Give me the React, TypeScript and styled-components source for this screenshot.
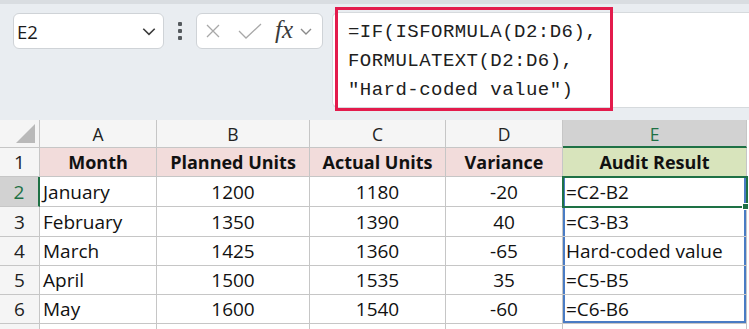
import styled, { createGlobalStyle } from "styled-components";

const GlobalStyle = createGlobalStyle`
    html, body {
        margin: 0;
        padding: 0;
        background: #ffffff;
        overflow: hidden;
    }
    * {
        box-sizing: border-box;
    }
`;

const Page = styled.div`
    width: 749px;
    height: 329px;
    overflow: hidden;
    background: #ffffff;
    font-family: "Open Sans", "Liberation Sans", sans-serif;
`;

const Toolbar = styled.div`
    height: 120px;
    background: #e9edf1;
    border-top: 4px solid #d9dde1;
    display: flex;
    align-items: flex-start;
    padding: 9px 0 0 13px;
`;

const NameBox = styled.div`
    width: 151px;
    height: 36px;
    background: #ffffff;
    border: 1px solid #cfd3d7;
    border-radius: 6px;
    display: flex;
    align-items: center;
    justify-content: space-between;
    padding: 0 6px 0 3px;
    font-size: 18.5px;
    color: #1b1b1b;
`;

const Dots = styled.div`
    width: 32px;
    height: 36px;
    display: flex;
    flex-direction: column;
    align-items: center;
    justify-content: center;
    gap: 3px;

    span {
        width: 4px;
        height: 4px;
        border-radius: 1px;
        background: #555a5e;
    }
`;

const ButtonsBox = styled.div`
    width: 127px;
    height: 36px;
    background: #ffffff;
    border: 1px solid #cfd3d7;
    border-radius: 6px;
    display: flex;
    align-items: center;
    padding: 0 0 0 8px;
`;

const Fx = styled.span`
    font-family: "Liberation Serif", "DejaVu Serif", serif;
    font-style: italic;
    font-size: 25px;
    color: #3a3a3a;
    margin: -3px 6px 0 12px;
    letter-spacing: 0px;
`;

const FormulaBar = styled.div`
    position: relative;
    flex: 1;
    height: 96px;
    margin: -1px 0 0 9px;
    background: #ffffff;
    border: 1px solid #d6dadd;
    border-right: none;
    border-radius: 6px 0 0 6px;
`;

const FormulaText = styled.pre`
    margin: 0;
    padding: 5px 0 0 15px;
    font-family: "Liberation Mono", "DejaVu Sans Mono", monospace;
    font-size: 19px;
    letter-spacing: 0.46px;
    line-height: 29px;
    color: #202020;
`;

const Highlight = styled.div`
    position: absolute;
    left: 2px;
    top: -6px;
    width: 278px;
    height: 104px;
    border: 3px solid #e31b4c;
    pointer-events: none;
`;

const Sheet = styled.div`
    display: grid;
    grid-template-columns: 40px 117px 153px 136px 117px 184px;
    grid-template-rows: 28px 29px 30px 30px 29px 29px 29px 10px;
    background: #ffffff;
`;

const ColHead = styled.div<{ $active?: boolean }>`
    display: flex;
    align-items: center;
    justify-content: center;
    background: ${({ $active }) => ($active ? "#d2d2d2" : "#f5f5f5")};
    color: ${({ $active }) => ($active ? "#1e7145" : "#222222")};
    border-right: 1px solid #c6c6c6;
    border-bottom: ${({ $active }) => ($active ? "2px solid #1e7145" : "1px solid #c6c6c6")};
    font-size: 17.5px;
    padding-top: 1px;
`;

const Corner = styled.div`
    position: relative;
    background: #f5f5f5;
    border-right: 1px solid #c6c6c6;
    border-bottom: 1px solid #c6c6c6;

    &::after {
        content: "";
        position: absolute;
        right: 4px;
        bottom: 4px;
        width: 0;
        height: 0;
        border-left: 19px solid transparent;
        border-bottom: 19px solid #b9b9b9;
    }
`;

const RowHead = styled.div<{ $active?: boolean }>`
    display: flex;
    align-items: center;
    justify-content: center;
    background: ${({ $active }) => ($active ? "#d2d2d2" : "#f5f5f5")};
    color: ${({ $active }) => ($active ? "#1e7145" : "#222222")};
    border-right: ${({ $active }) => ($active ? "2px solid #1e7145" : "1px solid #c6c6c6")};
    border-bottom: 1px solid #c6c6c6;
    font-size: 19px;
`;

const Cell = styled.div<{ $align?: "left" | "center"; $head?: "red" | "green"; $spill?: "mid" | "last"; $active?: boolean }>`
    position: relative;
    display: flex;
    align-items: center;
    justify-content: ${({ $align }) => ($align === "center" ? "center" : "flex-start")};
    padding: 0 3px;
    white-space: nowrap;
    font-weight: ${({ $head }) => ($head ? 700 : 400)};
    font-size: ${({ $head }) => ($head ? "18px" : "19px")};
    color: #111111;
    background: ${({ $head }) => ($head === "red" ? "#f2dcdb" : $head === "green" ? "#d8e4bc" : "#ffffff")};
    border-right: 1px solid #c6c6c6;
    border-bottom: 1px solid #c6c6c6;
    ${({ $spill }) =>
        $spill === "mid"
            ? "box-shadow: inset 2px 0 0 #4a7cc4, inset -2px 0 0 #4a7cc4;"
            : $spill === "last"
            ? "box-shadow: inset 2px 0 0 #4a7cc4, inset -2px 0 0 #4a7cc4, inset 0 -2px 0 #4a7cc4;"
            : ""}
    ${({ $active }) =>
        $active ? "outline: 2px solid #1e7145; outline-offset: -1px; z-index: 1;" : ""}
`;

const FillHandle = styled.div`
    position: absolute;
    right: -2px;
    bottom: -4px;
    width: 6px;
    height: 7px;
    background: #1e7145;
    border: 1px solid #ffffff;
    border-right: none;
`;

const Blank = styled.div<{ $head?: boolean }>`
    background: ${({ $head }) => ($head ? "#f5f5f5" : "#ffffff")};
    border-right: 1px solid #c6c6c6;
`;

const Chevron = ({ size = 14, color = "#444" }: { size?: number; color?: string }) => (
    <svg width={size} height={size} viewBox="0 0 14 14">
        <path d="M2 5 L7 10 L12 5" fill="none" stroke={color} strokeWidth="1.4" />
    </svg>
);

const rows = [
    { month: "January", planned: 1200, actual: 1180, variance: -20, audit: "=C2-B2" },
    { month: "February", planned: 1350, actual: 1390, variance: 40, audit: "=C3-B3" },
    { month: "March", planned: 1425, actual: 1360, variance: -65, audit: "Hard-coded value" },
    { month: "April", planned: 1500, actual: 1535, variance: 35, audit: "=C5-B5" },
    { month: "May", planned: 1600, actual: 1540, variance: -60, audit: "=C6-B6" },
];

export default function App() {
    return (
        <Page>
            <GlobalStyle />
            <Toolbar>
                <NameBox>
                    <span>E2</span>
                    <Chevron size={16} color="#3c3c3c" />
                </NameBox>
                <Dots>
                    <span />
                    <span />
                    <span />
                </Dots>
                <ButtonsBox>
                    <svg width="16" height="16" viewBox="0 0 16 16">
                        <path d="M2 2 L14 14 M14 2 L2 14" stroke="#a8a8a8" strokeWidth="1.3" fill="none" />
                    </svg>
                    <svg width="26" height="16" viewBox="0 0 26 16" style={{ marginLeft: 16 }}>
                        <path d="M2 8 L9 15 L24 1" stroke="#a8a8a8" strokeWidth="1.3" fill="none" />
                    </svg>
                    <Fx>fx</Fx>
                    <Chevron size={14} color="#8a8a8a" />
                </ButtonsBox>
                <FormulaBar>
                    <FormulaText>
                        {"=IF(ISFORMULA(D2:D6),\nFORMULATEXT(D2:D6),\n\"Hard-coded value\")"}
                    </FormulaText>
                    <Highlight />
                </FormulaBar>
            </Toolbar>
            <Sheet>
                <Corner />
                <ColHead>A</ColHead>
                <ColHead>B</ColHead>
                <ColHead>C</ColHead>
                <ColHead>D</ColHead>
                <ColHead $active>E</ColHead>

                <RowHead>1</RowHead>
                <Cell $align="center" $head="red">Month</Cell>
                <Cell $align="center" $head="red">Planned Units</Cell>
                <Cell $align="center" $head="red">Actual Units</Cell>
                <Cell $align="center" $head="red">Variance</Cell>
                <Cell $align="center" $head="green">Audit Result</Cell>

                {rows.map((r, i) => (
                    <>
                        <RowHead key={`h${i}`} $active={i === 0}>{i + 2}</RowHead>
                        <Cell key={`a${i}`}>{r.month}</Cell>
                        <Cell key={`b${i}`} $align="center">{r.planned}</Cell>
                        <Cell key={`c${i}`} $align="center">{r.actual}</Cell>
                        <Cell key={`d${i}`} $align="center">{r.variance}</Cell>
                        <Cell key={`e${i}`} $active={i === 0} $spill={i === rows.length - 1 ? "last" : "mid"}>
                            {r.audit}
                            {i === 0 && <FillHandle />}
                        </Cell>
                    </>
                ))}

                <Blank $head />
                <Blank />
                <Blank />
                <Blank />
                <Blank />
                <Blank />
            </Sheet>
        </Page>
    );
}
